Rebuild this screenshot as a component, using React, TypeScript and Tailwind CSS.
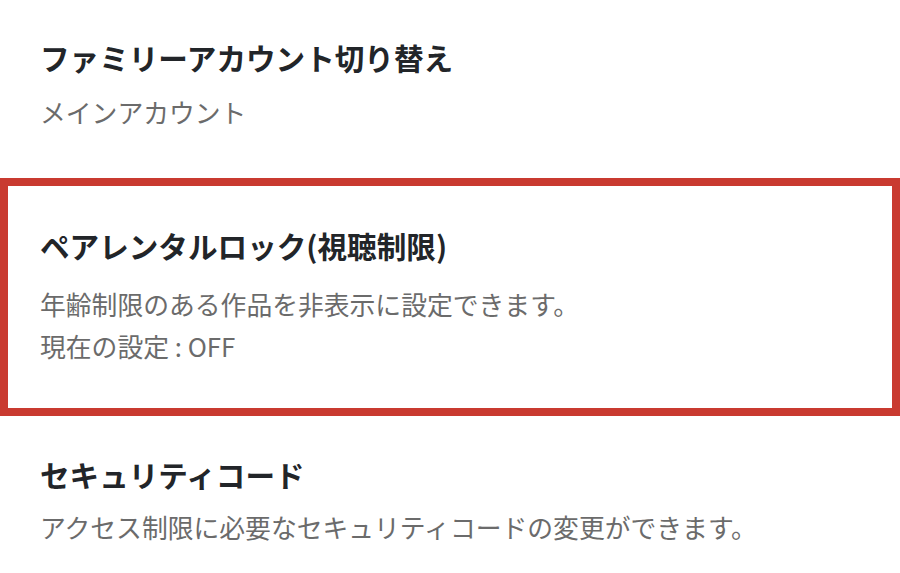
const font = { fontFamily: '"Noto Sans CJK JP", "Noto Sans", sans-serif' }

export default function App() {
  return (
    <div className="min-h-[573px] w-[900px] overflow-hidden bg-white text-[#222529]" style={font}>
      <section className="px-10 pt-[38px] pb-[45px]">
        <h2 className="text-[29.6px] leading-[40px] font-bold">ファミリーアカウント切り替え</h2>
        <p className="mt-[13px] text-[25.8px] leading-[42px] text-[#6b6b6b]">メインアカウント</p>
      </section>

      <section className="border-[8px] border-[#c93a30] px-8 pt-10 pb-[41px]">
        <h2 className="text-[29.6px] leading-[40px] font-bold">ペアレンタルロック(視聴制限)</h2>
        <div className="mt-[17px] text-[25.8px] leading-[42px] text-[#6b6b6b]">
          <p>年齢制限のある作品を非表示に設定できます。</p>
          <p>現在の設定 : OFF</p>
        </div>
      </section>

      <section className="px-10 pt-[39px]">
        <h2 className="text-[29.6px] leading-[40px] font-bold">セキュリティコード</h2>
        <p className="mt-[11px] text-[25.8px] leading-[42px] text-[#6b6b6b]">
          アクセス制限に必要なセキュリティコードの変更ができます。
        </p>
      </section>
    </div>
  )
}
